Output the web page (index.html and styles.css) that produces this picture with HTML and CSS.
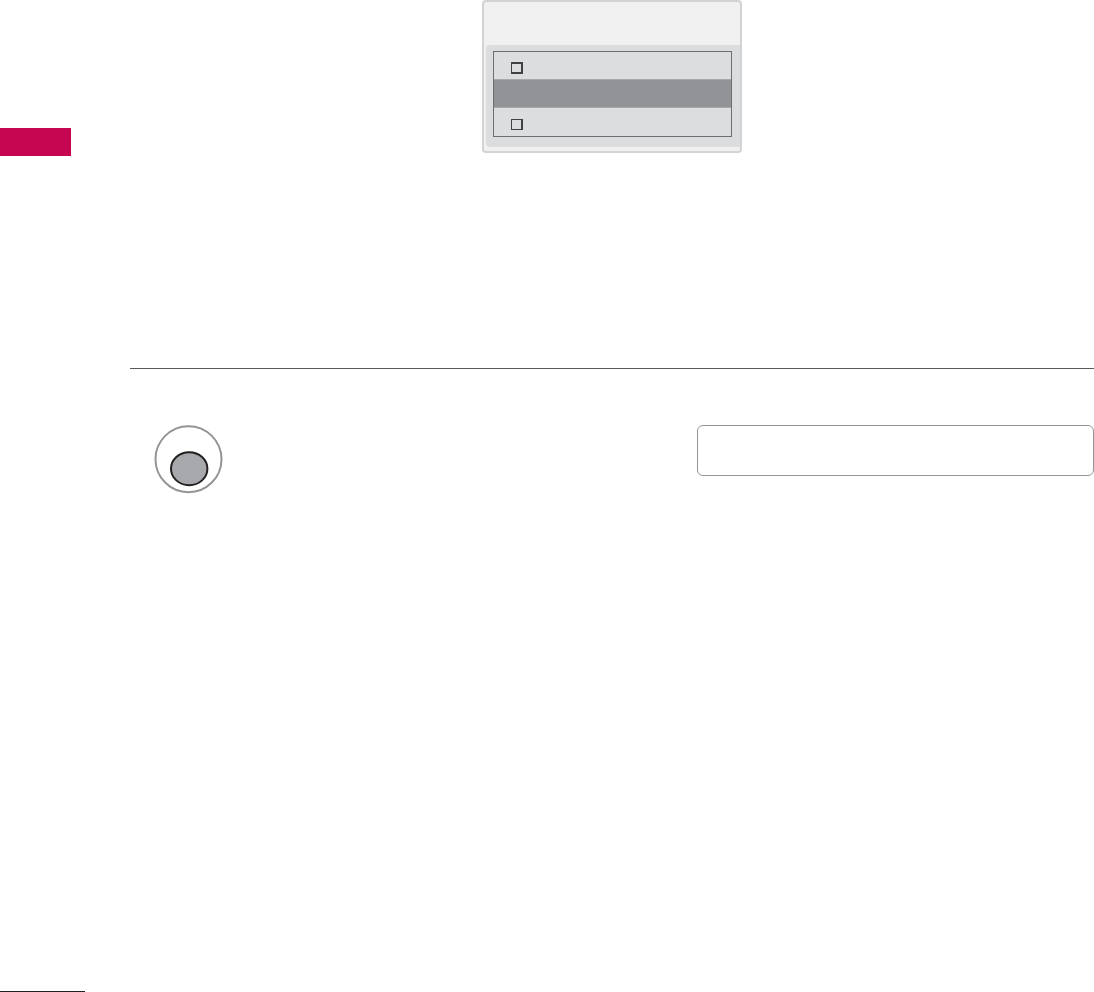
FILE: index.html
```
<!DOCTYPE html>
<html lang="en">
<head>
    <meta charset="UTF-8">
    <meta name="viewport" content="width=device-width, initial-scale=1.0">
    <title>Manual Page</title>
    <link rel="stylesheet" href="styles.css">
</head>
<body>
    <div class="page">
        <aside class="margin">
            <div class="chapter-tab"></div>
            <div class="footer-line"></div>
        </aside>
        <main class="content">
            <section class="intro">
                <div class="screen">
                    <div class="panel">
                        <div class="list">
                            <div class="row"><span class="checkbox"></span></div>
                            <div class="row selected"></div>
                            <div class="row last"><span class="checkbox thin"></span></div>
                        </div>
                    </div>
                </div>
            </section>
            <section class="step">
                <svg class="knob" width="70" height="70" viewBox="0 0 70 70">
                    <circle cx="34.5" cy="35.2" r="33" fill="#fff" stroke="#929497" stroke-width="2"/>
                    <ellipse cx="35.2" cy="44.7" rx="18.2" ry="16.5" fill="#a7a9ac" stroke="#231f20" stroke-width="2"/>
                </svg>
                <div class="note"></div>
            </section>
        </main>
    </div>
</body>
</html>
```

FILE: styles.css
```
* {
    box-sizing: border-box;
}
body {
    margin: 0;
    background-color: #fff;
    font-family: "Liberation Sans", Arial, sans-serif;
}
.page {
    display: flex;
    width: 1094px;
    height: 992px;
    overflow: hidden;
}
.margin {
    display: flex;
    flex-direction: column;
    justify-content: space-between;
    width: 130px;
    padding-top: 128px;
}
.chapter-tab {
    width: 71px;
    height: 28px;
    background-color: #c60651;
}
.footer-line {
    width: 85px;
    height: 1px;
    background-color: #231f20;
}
.content {
    flex: 1;
}
.intro {
    height: 369px;
    padding-left: 352px;
    border-bottom: 1px solid #58595b;
}

/* phone screen */
.screen {
    width: 260px;
    height: 153px;
    padding: 43px 0 0 2px;
    background-color: #f0f0f0;
    border: 2px solid #d1d3d4;
    border-radius: 4px;
}
.panel {
    width: 254px;
    height: 102px;
    padding: 6px 0 0 7px;
    background-color: #dadcde;
    border-radius: 4px 0 0 4px;
}
.list {
    width: 239px;
    height: 86px;
    border: 1px solid #6d6e71;
}
.row {
    height: 27px;
    padding: 10px 0 0 17px;
    background-color: #dcddde;
}
.row.selected {
    height: 29px;
    background-color: #929397;
    border-top: 1px solid #a7a9ac;
    border-bottom: 1px solid #a7a9ac;
}
.row.last {
    height: 28px;
    padding-top: 11px;
}
.checkbox {
    display: block;
    width: 12px;
    height: 12px;
    border: 2px solid #414042;
    border-left-width: 1px;
}
.checkbox.thin {
    height: 11px;
    border-top-width: 1px;
    border-bottom-width: 1px;
}

/* step row */
.step {
    display: flex;
    justify-content: space-between;
    padding: 55px 0 0 24px;
}
.note {
    width: 397px;
    height: 51px;
    margin-top: 1px;
    border: 1px solid #939598;
    border-radius: 6px;
}
```
